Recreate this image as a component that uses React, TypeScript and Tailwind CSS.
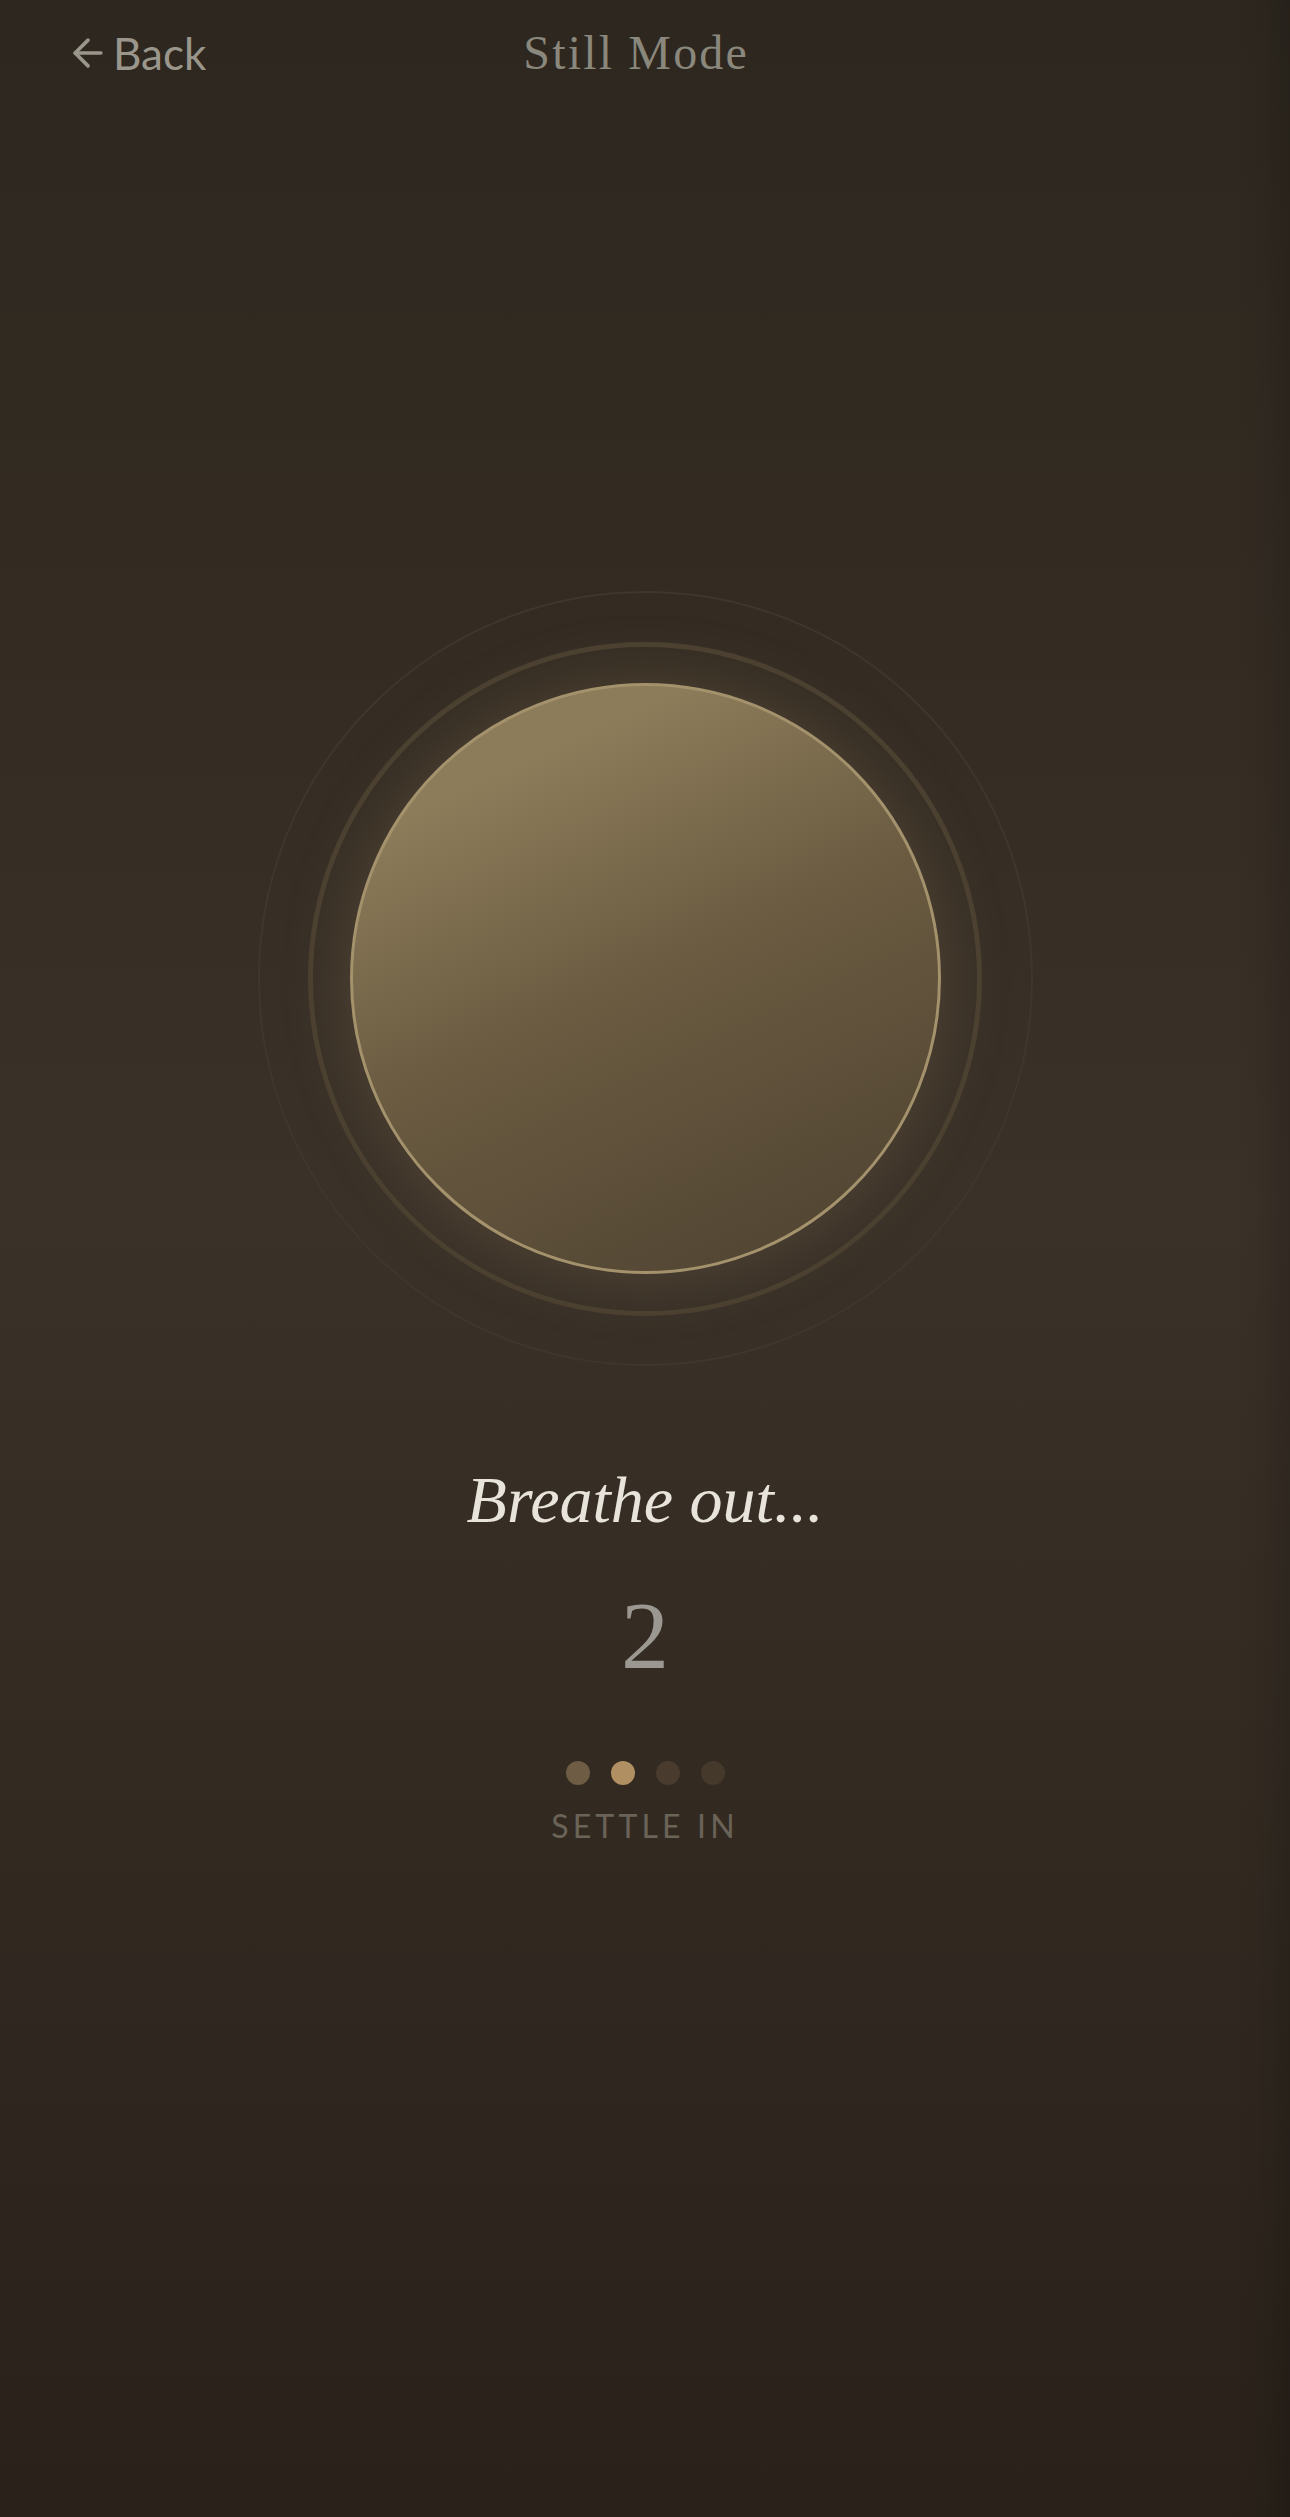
import { ArrowLeft } from 'lucide-react';

const DOTS = ['bg-[#6e5c44]', 'bg-[#b08f62]', 'bg-[#493c2e]', 'bg-[#45392c]'];

export default function App() {
  return (
    <div className="w-full h-[2517px] flex flex-col items-center overflow-hidden bg-[linear-gradient(180deg,#2d271f_0%,#342c23_25%,#3a3128_48%,#332b22_70%,#29211a_100%)] shadow-[inset_-50px_0_40px_-40px_rgba(0,0,0,0.2)]">
      {/* Header */}
      <header className="w-full h-[106px] flex items-center px-[66px]">
        <button className="flex items-center gap-[3px] text-[#9a968c] text-[44px] font-['Lato',sans-serif]">
          <ArrowLeft className="w-[44px] h-[44px]" strokeWidth={2} />
          Back
        </button>
        <h1 className="flex-1 text-center text-[#8a877c] text-[48px] tracking-[0.045em] font-['Liberation_Serif',serif]">
          Still Mode
        </h1>
        <div className="w-[158px]" />
      </header>

      {/* Breathing orb */}
      <div className="mt-[485px] w-[775px] h-[775px] rounded-full border-2 border-[#40362b] flex items-center justify-center">
        <div className="w-[674px] h-[674px] rounded-full border-[5px] border-[#4a3f30] flex items-center justify-center">
          <div className="w-[591px] h-[591px] rounded-full border-[3px] border-[#a4926c] bg-[linear-gradient(155deg,#8d7c5a_18%,#6a5b41_50%,#4c402f_100%)] shadow-[0_0_60px_10px_rgba(150,128,90,0.22)]" />
        </div>
      </div>

      {/* Prompt */}
      <p className="mt-[101px] text-[66px] leading-none italic text-[#e8e4dc] font-['Liberation_Serif',serif]">
        Breathe out...
      </p>
      <p className="mt-[55px] text-[96px] leading-none text-[#9b9791] font-['Liberation_Serif',serif]">
        2
      </p>

      <div className="mt-[77px] flex gap-[21px]">
        {DOTS.map((c, i) => (
          <span key={i} className={`w-[24px] h-[24px] rounded-full ${c}`} />
        ))}
      </div>
      <p className="mt-[25px] text-[32px] leading-none tracking-[0.13em] text-[#6a6358] font-['Lato',sans-serif]">
        SETTLE IN
      </p>
    </div>
  );
}
